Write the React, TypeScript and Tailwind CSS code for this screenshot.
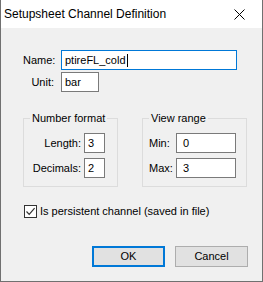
export default function App() {
  return (
    <div className="flex h-[282px] w-[263px] flex-col border-x border-b border-[#707070] bg-[#f0f0f0] font-['Liberation_Sans',Arial,sans-serif] text-[11px] leading-[13px] text-black">
      <TitleBar />
      <div className="flex flex-col">
        <div className="mt-[22px] grid grid-cols-[31px_176px] items-center gap-x-[7px] gap-y-[2px] pl-[22px]">
          <span className="text-right">Name:</span>
          <TextBox value="ptireFL_cold" focused />
          <span className="text-right">Unit:</span>
          <TextBox value="bar" className="w-[38px]" />
        </div>

        <div className="mt-[20px] flex gap-[24px] pl-[22px]">
          <fieldset className="h-[75px] w-[95px] border border-[#dcdcdc]">
            <legend className="ml-[6px] px-[2px]">Number format</legend>
            <div className="grid grid-cols-[57px_21px] items-center gap-x-[3px] gap-y-[5px] pt-[8px]">
              <span className="text-right">Length:</span>
              <TextBox value="3" />
              <span className="text-right">Decimals:</span>
              <TextBox value="2" />
            </div>
          </fieldset>
          <fieldset className="h-[75px] w-[105px] border border-[#dcdcdc]">
            <legend className="ml-[6px] px-[2px]">View range</legend>
            <div className="grid grid-cols-[24px_60px] items-center gap-x-[3px] gap-y-[5px] pl-[6px] pt-[8px]">
              <span>Min:</span>
              <TextBox value="0" className="pl-[6px]" />
              <span>Max:</span>
              <TextBox value="3" className="pl-[6px]" />
            </div>
          </fieldset>
        </div>

        <label className="mt-[18px] flex items-center gap-[3px] pl-[23px]">
          <span className="flex h-[13px] w-[13px] items-center justify-center border border-[#333333] bg-white">
            <svg width="11" height="11" viewBox="0 0 11 11" fill="none">
              <path d="M1.5 5.5 L4.2 8.3 L9.6 2.2" stroke="#333" strokeWidth="1.2" />
            </svg>
          </span>
          <span>Is persistent channel (saved in file)</span>
        </label>

        <div className="mt-[28px] flex justify-end gap-[10px] pr-[14px]">
          <button className="flex h-[21px] w-[73px] items-center justify-center border-2 border-[#0078d7] bg-[#e1e1e1]">
            OK
          </button>
          <button className="flex h-[21px] w-[73px] items-center justify-center border border-[#adadad] bg-[#e1e1e1]">
            Cancel
          </button>
        </div>
      </div>
    </div>
  );
}

function TitleBar() {
  return (
    <div className="flex h-[28px] items-center justify-between bg-white pl-[3px]">
      <span className="text-[12px] leading-[16px]">Setupsheet Channel Definition</span>
      <div className="flex h-full w-[46px] items-center justify-center">
        <svg width="11" height="11" viewBox="0 0 11 11">
          <path d="M0.5 0.5 L10.5 10.5 M10.5 0.5 L0.5 10.5" stroke="#000" strokeWidth="1" />
        </svg>
      </div>
    </div>
  );
}

function TextBox({
  value,
  focused,
  className = '',
}: {
  value: string;
  focused?: boolean;
  className?: string;
}) {
  return (
    <div
      className={`flex h-[20px] items-center border bg-white pl-[3px] ${
        focused ? 'border-[#0078d7]' : 'border-[#7a7a7a]'
      } ${className}`}
    >
      <span>{value}</span>
      {focused ? <span className="ml-px h-[13px] w-px bg-black" /> : null}
    </div>
  );
}
